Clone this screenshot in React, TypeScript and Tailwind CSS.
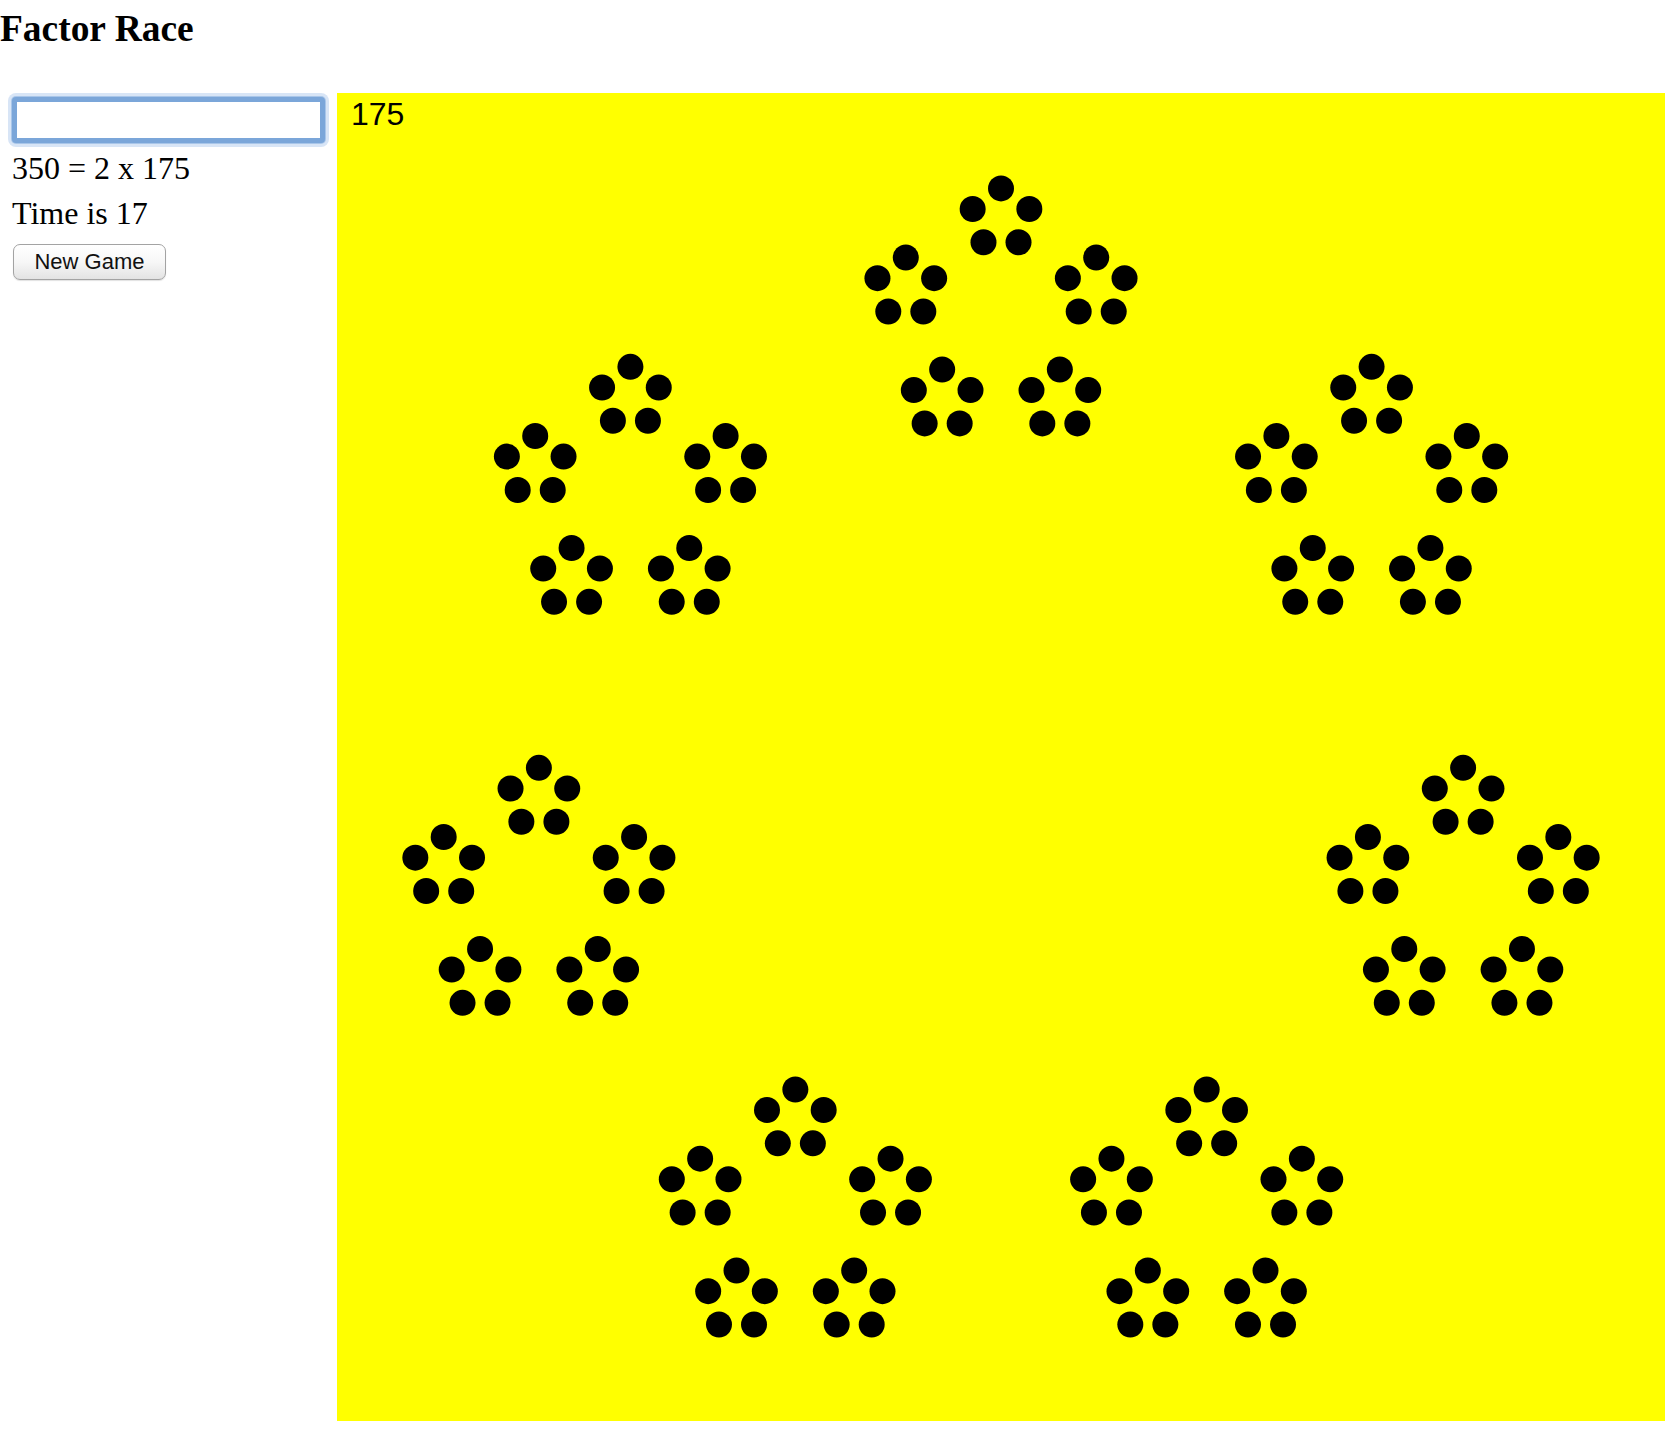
import React from "react";

const CX = 664;
const CY = 699.3;
const R = 474;
const r = 100.1;
const rho = 29.8;
const dotR = 13;

function computeDots() {
  const dots: { x: number; y: number }[] = [];
  for (let i = 0; i < 7; i++) {
    const a = -Math.PI / 2 + (i * 2 * Math.PI) / 7;
    const cx = CX + R * Math.cos(a);
    const cy = CY + R * Math.sin(a);
    for (let j = 0; j < 5; j++) {
      const b = -Math.PI / 2 + (j * 2 * Math.PI) / 5;
      const sx = cx + r * Math.cos(b);
      const sy = cy + r * Math.sin(b);
      for (let k = 0; k < 5; k++) {
        const c = -Math.PI / 2 + (k * 2 * Math.PI) / 5;
        dots.push({ x: sx + rho * Math.cos(c), y: sy + rho * Math.sin(c) });
      }
    }
  }
  return dots;
}

const DOTS = computeDots();

export default function App() {
  return (
    <div className="min-h-[1442px] w-[1679px] bg-white font-['Liberation_Serif',serif] text-black">
      <h3 className="h-[93px] pt-[10px] text-[37.44px] font-bold leading-none">Factor Race</h3>
      <div className="flex">
        <div className="flex w-[337px] flex-col pl-[12px]">
          <input
            type="text"
            className="mt-[4px] h-[46px] w-[313px] rounded-[4px] border-[5px] border-[#7ba6d9] bg-white shadow-[0_0_0_1px_#a9c6e9,0_0_0_4px_#d8e5f6] outline-none"
          />
          <div className="mt-[3px] text-[32px] leading-[45px]">350 = 2 x 175</div>
          <div className="text-[32px] leading-[45px]">Time is 17</div>
          <button className="mt-[8px] ml-[1px] h-[36px] w-[153px] rounded-[7px] border border-[#a3a3a3] bg-linear-to-b from-white via-[#f7f7f7] to-[#e3e3e3] font-['Liberation_Sans',Arial,sans-serif] text-[22px] leading-none text-[#111] shadow-[0_1px_1px_rgba(0,0,0,0.12)]">
            New Game
          </button>
        </div>
        <div className="relative h-[1328px] w-[1328px] bg-[#ffff00]">
          <span className="absolute left-[14px] top-[5px] font-['Liberation_Sans',Arial,sans-serif] text-[32px] leading-none text-black">
            175
          </span>
          <svg width="1328" height="1328" viewBox="0 0 1328 1328" className="block">
            {DOTS.map((d, i) => (
              <circle key={i} cx={d.x} cy={d.y} r={dotR} fill="#000" />
            ))}
          </svg>
        </div>
      </div>
    </div>
  );
}
